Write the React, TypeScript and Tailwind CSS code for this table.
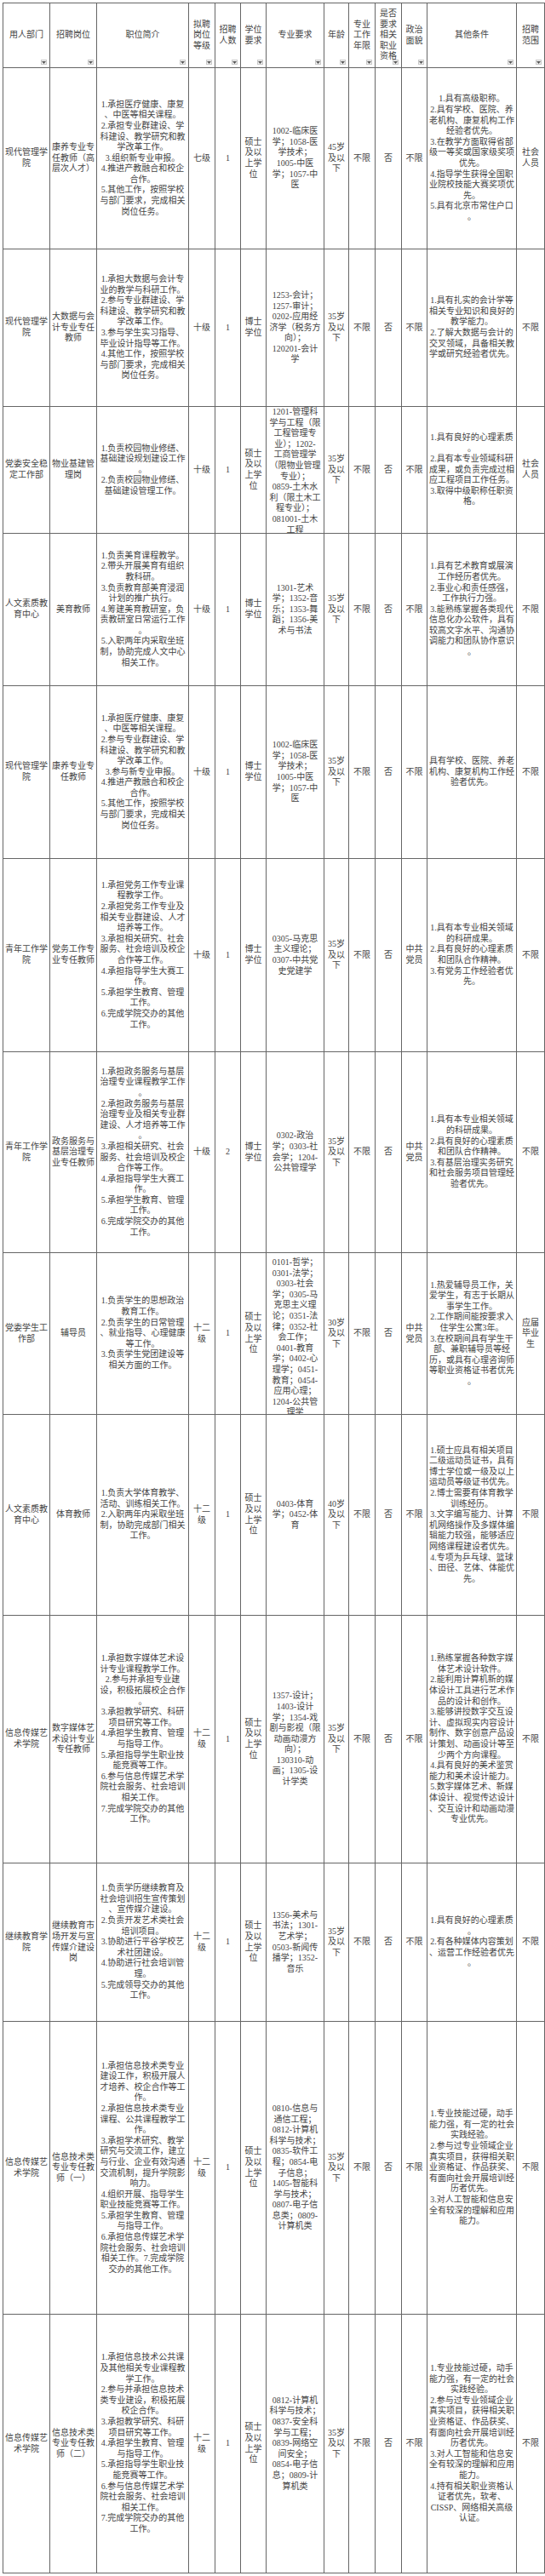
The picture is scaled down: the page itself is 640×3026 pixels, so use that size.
import React from "react";

type Row = { h: string; c: string[]; top?: { i: number; cls: string } };

const header: string[] = [
  "用人部门",
  "招聘岗位",
  "职位简介",
  "拟聘|岗位|等级",
  "招聘|人数",
  "学位|要求",
  "专业要求",
  "年龄",
  "专业|工作|年限",
  "是否|要求|相关|职业|资格",
  "政治|面貌",
  "其他条件",
  "招聘|范围",
];

const MS = "硕士|及以|上学|位";
const AGE35 = "35岁|及以|下";

const rows: Row[] = [
  {
    h: "h-[213px]",
    c: [
      "现代管理学|院",
      "康养专业专|任教师（高|层次人才）",
      "1.承担医疗健康、康复|、中医等相关课程。|2.承担专业群建设、学|科建设、教学研究和教|学改革工作。|3.组织新专业申报。|4.推进产教融合和校企|合作。|5.其他工作，按照学校|与部门要求，完成相关|岗位任务。",
      "七级",
      "1",
      MS,
      "1002-临床医|学；1058-医|学技术；|1005-中医|学；1057-中|医",
      "45岁|及以|下",
      "不限",
      "否",
      "不限",
      "1.具有高级职称。|2.具有学校、医院、养|老机构、康复机构工作|经验者优先。|3.在教学方面取得省部|级一等奖或国家级奖项|优先。|4.指导学生获得全国职|业院校技能大赛奖项优|先。|5.具有北京市常住户口|。",
      "社会|人员",
    ],
  },
  {
    h: "h-[185px]",
    c: [
      "现代管理学|院",
      "大数据与会|计专业专任|教师",
      "1.承担大数据与会计专|业的教学与科研工作。|2.参与专业群建设、学|科建设、教学研究和教|学改革工作。|3.参与学生实习指导、|毕业设计指导等工作。|4.其他工作，按照学校|与部门要求，完成相关|岗位任务。",
      "十级",
      "1",
      "博士|学位",
      "1253-会计；|1257-审计；|0202-应用经|济学（税务方|向）；|120201-会计|学",
      AGE35,
      "不限",
      "否",
      "不限",
      "1.具有扎实的会计学等|相关专业知识和良好的|教学能力。|2.了解大数据与会计的|交叉领域，具备相关教|学或研究经验者优先。",
      "不限",
    ],
  },
  {
    h: "h-[149px]",
    top: { i: 6, cls: "pt-[0px]" },
    c: [
      "党委安全稳|定工作部",
      "物业基建管|理岗",
      "1.负责校园物业修缮、|基础建设规划建设工作|。|2.负责校园物业修缮、|基础建设管理工作。",
      "十级",
      "1",
      MS,
      "1201-管理科|学与工程（限|工程管理专|业）；1202-|工商管理学|（限物业管理|专业）；|0859-土木水|利（限土木工|程专业）；|081001-土木|工程",
      AGE35,
      "不限",
      "否",
      "不限",
      "1.具有良好的心理素质|。|2.具有本专业领域科研|成果，或负责完成过相|应工程项目工作任务。|3.取得中级职称任职资|格。",
      "社会|人员",
    ],
  },
  {
    h: "h-[179px]",
    c: [
      "人文素质教|育中心",
      "美育教师",
      "1.负责美育课程教学。|2.带头开展美育有组织|教科研。|3.负责教育部美育浸润|计划的推广执行。|4.筹建美育教研室，负|责教研室日常运行工作|。|5.入职两年内采取坐班|制，协助完成人文中心|相关工作。",
      "十级",
      "1",
      "博士|学位",
      "1301-艺术|学；1352-音|乐；1353-舞|蹈；1356-美|术与书法",
      AGE35,
      "不限",
      "否",
      "不限",
      "1.具有艺术教育或展演|工作经历者优先。|2.事业心和责任感强，|工作执行力强。|3.能熟练掌握各类现代|信息化办公软件，具有|较高文字水平、沟通协|调能力和团队协作意识|。",
      "不限",
    ],
  },
  {
    h: "h-[203px]",
    c: [
      "现代管理学|院",
      "康养专业专|任教师",
      "1.承担医疗健康、康复|、中医等相关课程。|2.参与专业群建设、学|科建设、教学研究和教|学改革工作。|3.参与新专业申报。|4.推进产教融合和校企|合作。|5.其他工作，按照学校|与部门要求，完成相关|岗位任务。",
      "十级",
      "1",
      "博士|学位",
      "1002-临床医|学；1058-医|学技术；|1005-中医|学；1057-中|医",
      AGE35,
      "不限",
      "否",
      "不限",
      "具有学校、医院、养老|机构、康复机构工作经|验者优先。",
      "不限",
    ],
  },
  {
    h: "h-[227px]",
    c: [
      "青年工作学|院",
      "党务工作专|业专任教师",
      "1.承担党务工作专业课|程教学工作。|2.承担党务工作专业及|相关专业群建设、人才|培养等工作。|3.承担相关研究、社会|服务、社会培训及校企|合作等工作。|4.承担指导学生大赛工|作。|5.承担学生教育、管理|工作。|6.完成学院交办的其他|工作。",
      "十级",
      "1",
      "博士|学位",
      "0305-马克思|主义理论；|0307-中共党|史党建学",
      AGE35,
      "不限",
      "否",
      "中共|党员",
      "1.具有本专业相关领域|的科研成果。|2.具有良好的心理素质|和团队合作精神。|3.有党务工作经验者优|先。",
      "不限",
    ],
  },
  {
    h: "h-[236px]",
    c: [
      "青年工作学|院",
      "政务服务与|基层治理专|业专任教师",
      "1.承担政务服务与基层|治理专业课程教学工作|。|2.承担政务服务与基层|治理专业及相关专业群|建设、人才培养等工作|。|3.承担相关研究、社会|服务、社会培训及校企|合作等工作。|4.承担指导学生大赛工|作。|5.承担学生教育、管理|工作。|6.完成学院交办的其他|工作。",
      "十级",
      "2",
      "博士|学位",
      "0302-政治|学；0303-社|会学；1204-|公共管理学",
      AGE35,
      "不限",
      "否",
      "中共|党员",
      "1.具有本专业相关领域|的科研成果。|2.具有良好的心理素质|和团队合作精神。|3.有基层治理实务研究|和社会服务项目管理经|验者优先。",
      "不限",
    ],
  },
  {
    h: "h-[190px]",
    top: { i: 6, cls: "pt-[5px]" },
    c: [
      "党委学生工|作部",
      "辅导员",
      "1.负责学生的思想政治|教育工作。|2.负责学生的日常管理|、就业指导、心理健康|等工作。|3.负责学生党团建设等|相关方面的工作。",
      "十二|级",
      "1",
      MS,
      "0101-哲学；|0301-法学；|0303-社会|学；0305-马|克思主义理|论；0351-法|律；0352-社|会工作；|0401-教育|学；0402-心|理学；0451-|教育；0454-|应用心理；|1204-公共管|理学",
      "30岁|及以|下",
      "不限",
      "否",
      "中共|党员",
      "1.热爱辅导员工作，关|爱学生，有志于长期从|事学生工作。|2.工作期间能按要求入|住学生公寓3年。|3.在校期间具有学生干|部、兼职辅导员等经|历，或具有心理咨询师|等职业资格证书者优先|。",
      "应届|毕业|生",
    ],
  },
  {
    h: "h-[236px]",
    c: [
      "人文素质教|育中心",
      "体育教师",
      "1.负责大学体育教学、|活动、训练相关工作。|2.入职两年内采取坐班|制，协助完成部门相关|工作。",
      "十二|级",
      "1",
      MS,
      "0403-体育|学；0452-体|育",
      "40岁|及以|下",
      "不限",
      "否",
      "不限",
      "1.硕士应具有相关项目|二级运动员证书，具有|博士学位或一级及以上|运动员等级证书优先。|2.博士需要有体育教学|训练经历。|3.文字编写能力、计算|机网络操作及多媒体编|辑能力较强，能够适应|网络课程建设者优先。|4.专项为乒乓球、篮球|、田径、艺体、体能优|先。",
      "不限",
    ],
  },
  {
    h: "h-[291px]",
    c: [
      "信息传媒艺|术学院",
      "数字媒体艺|术设计专业|专任教师",
      "1.承担数字媒体艺术设|计专业课程教学工作。|2.参与并承担专业建|设，积极拓展校企合作|。|3.承担教学研究、科研|项目研究等工作。|4.承担学生教育、管理|与指导工作。|5.承担指导学生职业技|能竞赛等工作。|6.参与信息传媒艺术学|院社会服务、社会培训|相关工作。|7.完成学院交办的其他|工作。",
      "十二|级",
      "1",
      MS,
      "1357-设计；|1403-设计|学；1354-戏|剧与影视（限|动画动漫方|向）；|130310-动|画；1305-设|计学类",
      AGE35,
      "不限",
      "否",
      "不限",
      "1.熟练掌握各种数字媒|体艺术设计软件。|2.能利用计算机新的媒|体设计工具进行艺术作|品的设计和创作。|3.能够讲授数字交互设|计、虚拟现实内容设计|制作、数字创意产品设|计策划、动画设计等至|少两个方向课程。|4.具有良好的美术鉴赏|能力和美术设计能力。|5.数字媒体艺术、新媒|体设计、视觉传达设计|、交互设计和动画动漫|专业优先。",
      "不限",
    ],
  },
  {
    h: "h-[186px]",
    c: [
      "继续教育学|院",
      "继续教育市|场开发与宣|传媒介建设|岗",
      "1.负责学历继续教育及|社会培训招生宣传策划|、宣传媒介建设。|2.负责开发艺术类社会|培训项目。|3.协助进行平谷学校艺|术社团建设。|4.协助进行社会培训管|理。|5.完成领导交办的其他|工作。",
      "十二|级",
      "1",
      MS,
      "1356-美术与|书法；1301-|艺术学；|0503-新闻传|播学；1352-|音乐",
      AGE35,
      "不限",
      "否",
      "不限",
      "1.具有良好的心理素质|。|2.有各种媒体内容策划|、运营工作经验者优先|。",
      "不限",
    ],
  },
  {
    h: "h-[344px]",
    c: [
      "信息传媒艺|术学院",
      "信息技术类|专业专任教|师（一）",
      "1.承担信息技术类专业|建设工作，积极开展人|才培养、校企合作等工|作。|2.承担信息技术类专业|课程、公共课程教学工|作。|3.承担学术研究、教学|研究与交流工作，建立|与行业、企业有效沟通|交流机制，提升学院影|响力。|4.组织开展、指导学生|职业技能竞赛等工作。|5.承担学生教育、管理|与指导工作。|6.承担信息传媒艺术学|院社会服务、社会培训|相关工作。7.完成学院|交办的其他工作。",
      "十二|级",
      "1",
      MS,
      "0810-信息与|通信工程；|0812-计算机|科学与技术；|0835-软件工|程；0854-电|子信息；|1405-智能科|学与技术；|0807-电子信|息类；0809-|计算机类",
      AGE35,
      "不限",
      "否",
      "不限",
      "1.专业技能过硬，动手|能力强，有一定的社会|实践经验。|2.参与过专业领域企业|真实项目，获得相关职|业资格证、作品获奖、|有面向社会开展培训经|历者优先。|3.对人工智能和信息安|全有较深的理解和应用|能力。",
      "不限",
    ],
  },
  {
    h: "h-[304px]",
    c: [
      "信息传媒艺|术学院",
      "信息技术类|专业专任教|师（二）",
      "1.承担信息技术公共课|及其他相关专业课程教|学工作。|2.参与并承担信息技术|类专业建设，积极拓展|校企合作。|3.承担教学研究、科研|项目研究等工作。|4.承担学生教育、管理|与指导工作。|5.承担指导学生职业技|能竞赛等工作。|6.参与信息传媒艺术学|院社会服务、社会培训|相关工作。|7.完成学院交办的其他|工作。",
      "十二|级",
      "1",
      MS,
      "0812-计算机|科学与技术；|0837-安全科|学与工程；|0839-网络空|间安全；|0854-电子信|息；0809-计|算机类",
      AGE35,
      "不限",
      "否",
      "不限",
      "1.专业技能过硬，动手|能力强，有一定的社会|实践经验。|2.参与过专业领域企业|真实项目，获得相关职|业资格证、作品获奖、|有面向社会开展培训经|历者优先。|3.对人工智能和信息安|全有较深的理解和应用|能力。|4.持有相关职业资格认|证者优先，软考、|CISSP、网络相关高级|认证。",
      "不限",
    ],
  },
];

const GRID =
  "grid grid-cols-[55px_55px_108px_31px_30px_30px_68px_29px_31px_31px_30px_105px_33px]";

function Lines({ text }: { text: string }) {
  return (
    <div className="text-center leading-[12.6px]">
      {text.split("|").map((l, i) => (
        <div key={i} className="whitespace-pre">
          {l}
        </div>
      ))}
    </div>
  );
}

function FilterBox() {
  return (
    <div className="absolute bottom-[3px] right-[3px] w-[7px] h-[6px] border border-[#c8c8c8] bg-[#f2f2f2] flex items-center justify-center">
      <svg width="5" height="3" viewBox="0 0 5 3">
        <path d="M0 0 L5 0 L2.5 3 Z" fill="#555" />
      </svg>
    </div>
  );
}

export default function App() {
  return (
    <div className="w-[640px] h-[3026px] bg-white pt-[3px] pl-[3px] font-['Liberation_Serif','Noto_Sans_CJK_SC',serif] text-[10px] text-[#444]">
      <div className="border-l border-t border-[#666] w-[637px]">
        <div className={`${GRID} h-[76px]`}>
          {header.map((h, i) => (
            <div
              key={i}
              className="relative border-r border-b border-[#666] flex items-center justify-center"
            >
              <Lines text={h} />
              <FilterBox />
            </div>
          ))}
        </div>
        {rows.map((r, ri) => (
          <div key={ri} className={`${GRID} ${r.h}`}>
            {r.c.map((c, ci) => {
              const isTop = r.top && r.top.i === ci;
              return (
                <div
                  key={ci}
                  className={
                    "border-r border-b border-[#666] flex justify-center overflow-hidden " +
                    (isTop ? "items-start " + r.top!.cls : "items-center")
                  }
                >
                  <Lines text={c} />
                </div>
              );
            })}
          </div>
        ))}
      </div>
    </div>
  );
}
